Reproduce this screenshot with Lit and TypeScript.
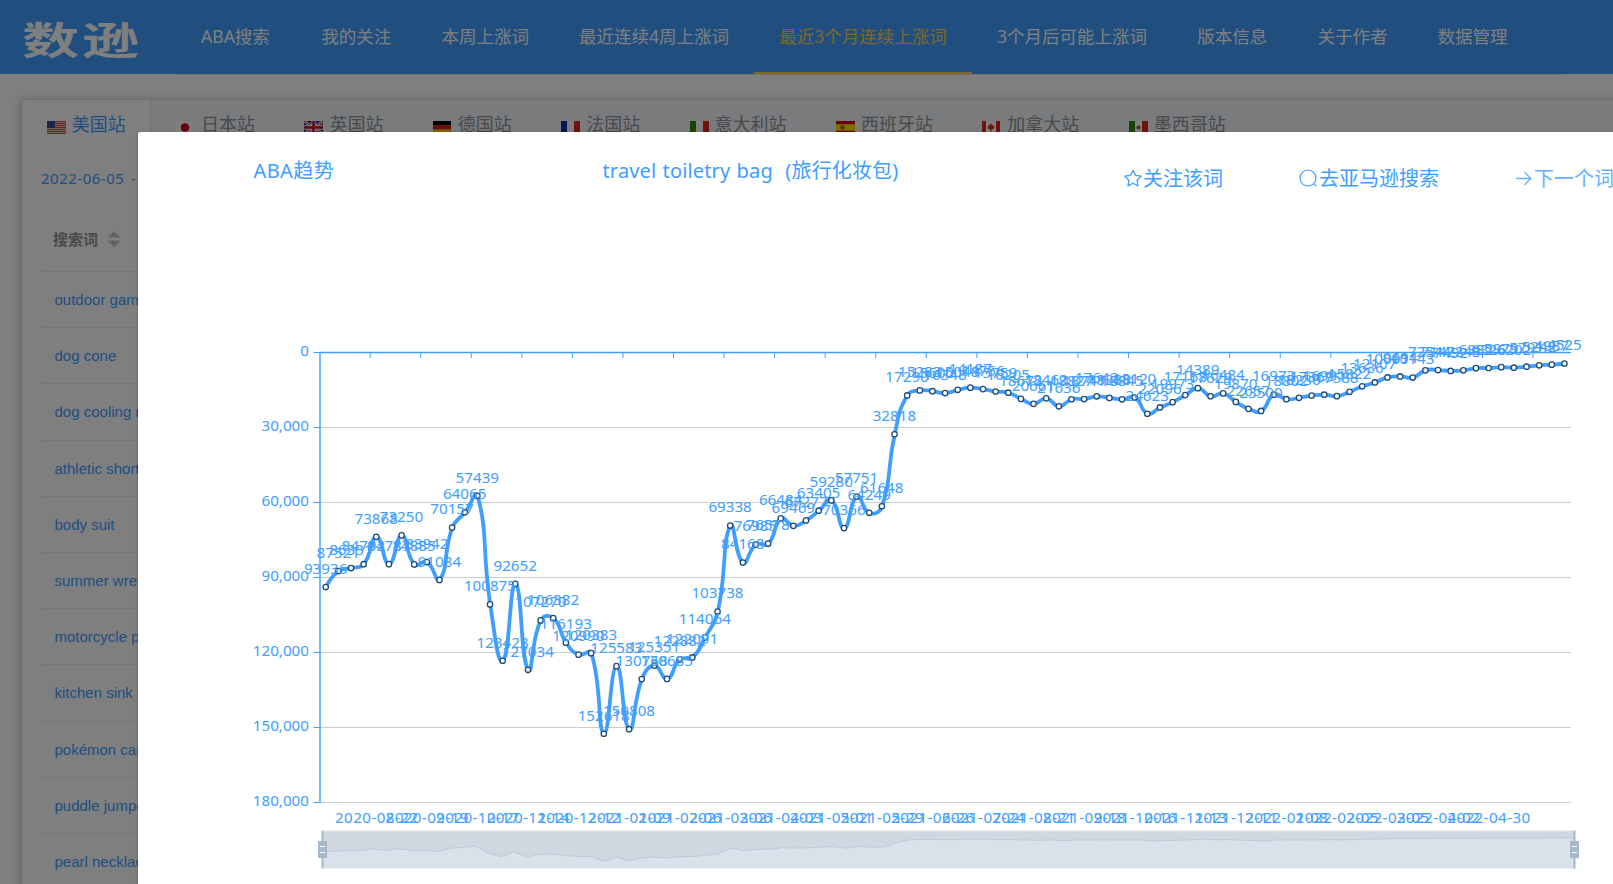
import { LitElement, html, svg, css } from 'lit';
import { customElement, property } from 'lit/decorators.js';
import { classMap } from 'lit/directives/class-map.js';

const RANKS = [
  93936, 87521, 86331, 84792, 73868, 84787, 73250, 84885, 83942, 91084,
  70157, 64065, 57439, 100875, 123423, 92652, 127034, 107270, 106382, 116193,
  120990, 120383, 152618, 125583, 150808, 130768, 125351, 130685, 122882, 122091,
  114064, 103738, 69338, 84168, 76985, 76578, 66484, 69469, 67277, 63405,
  59280, 70366, 57751, 64249, 61648, 32818, 17290, 15283, 15600, 16348,
  15048, 14187, 14756, 15759, 16205, 18672, 20661, 18462, 21636, 18827,
  18741, 17642, 18288, 18845, 18120, 24623, 22096, 19973, 17168, 14389,
  17629, 16484, 19870, 22657, 23500, 16973, 18802, 18236, 17369, 16991,
  17588, 15822, 13636, 12107, 10091, 9694, 10143, 7254, 7142, 7492,
  7243, 6382, 6326, 5979, 6202, 5791, 5242, 4987, 4525,
];

// one label for every fourth week, beginning with the fifth point
const DATES = [
  '2020-08-22', '2020-09-19', '2020-10-17', '2020-11-14', '2020-12-12', '2021-01-09',
  '2021-02-06', '2021-03-06', '2021-04-03', '2021-05-01', '2021-05-29', '2021-06-26',
  '2021-07-24', '2021-08-21', '2021-09-18', '2021-10-16', '2021-11-13', '2021-12-11',
  '2022-01-08', '2022-02-05', '2022-03-05', '2022-04-02', '2022-04-30',
];

const NAV = [
  'ABA搜索', '我的关注', '本周上涨词', '最近连续4周上涨词', '最近3个月连续上涨词',
  '3个月后可能上涨词', '版本信息', '关于作者', '数据管理',
];

const SITES = [
  ['us', '美国站'], ['jp', '日本站'], ['gb', '英国站'], ['de', '德国站'], ['fr', '法国站'],
  ['it', '意大利站'], ['es', '西班牙站'], ['ca', '加拿大站'], ['mx', '墨西哥站'],
];

const WORDS = [
  'outdoor games', 'dog cone', 'dog cooling mat', 'athletic shorts', 'body suit',
  'summer wreath', 'motorcycle phone mount', 'kitchen sink mat', 'pokémon cards',
  'puddle jumper', 'pearl necklace',
];

const FLAGS: Record<string, unknown> = {
  us: svg`<rect width="19" height="13" fill="#fff"/>
    ${[0, 2, 4, 6, 8, 10, 12].map(y => svg`<rect y=${y} width="19" height="1" fill="#d8504c"/>`)}
    ${[1, 3, 5, 7, 9, 11].map(y => svg`<rect y=${y} width="19" height="1" fill="#f0b4b4"/>`)}
    <rect width="8" height="7" fill="#3c4a8c"/>`,
  jp: svg`<rect width="17" height="13" fill="#fff"/><circle cx="9" cy="6.5" r="4.3" fill="#d0021b"/>`,
  gb: svg`<rect width="19" height="13" fill="#0a2a8c"/>
    <path d="M0 0L19 13M19 0L0 13" stroke="#fff" stroke-width="2.8"/>
    <path d="M0 0L19 13M19 0L0 13" stroke="#d0021b" stroke-width="1"/>
    <path d="M9.5 0V13M0 6.5H19" stroke="#fff" stroke-width="4.4"/>
    <path d="M9.5 0V13M0 6.5H19" stroke="#d0021b" stroke-width="2.4"/>`,
  de: svg`<rect width="18" height="4.5" fill="#000"/><rect y="4.3" width="18" height="4.4" fill="#dd1a00"/>
    <rect y="8.6" width="18" height="4.4" fill="#ffc800"/>`,
  fr: svg`<rect width="19" height="13" fill="#fff"/><rect width="6" height="13" fill="#0032a0"/>
    <rect x="13" width="6" height="13" fill="#e1261c"/>`,
  it: svg`<rect width="19" height="13" fill="#fff"/><rect width="6" height="13" fill="#2e8b00"/>
    <rect x="13" width="6" height="13" fill="#e1261c"/>`,
  es: svg`<rect width="19" height="13" fill="#ffe000"/><rect width="19" height="3.2" fill="#d0021b"/>
    <rect y="9.8" width="19" height="3.2" fill="#d0021b"/><circle cx="6.5" cy="6.5" r="2.2" fill="#a0671a"/>`,
  ca: svg`<rect width="18" height="13" fill="#fff"/><rect width="4" height="13" fill="#e1261c"/>
    <rect x="14" width="4" height="13" fill="#e1261c"/>
    <path d="M9 2l1 2 1-.5.1 1.5L12.5 5.5 11.5 8 9.5 8.8V11h-1V8.8L6.5 8 5.5 5.5 6.9 5 7 3.5 8 4z" fill="#e1261c"/>`,
  mx: svg`<rect width="19" height="13" fill="#fff"/><rect width="6" height="13" fill="#2e8b00"/>
    <rect x="13" width="6" height="13" fill="#e1261c"/><circle cx="9.5" cy="6.5" r="2" fill="#8a5a2a"/>`,
};

const BLUE = '#409eff';

@customElement('rank-chart')
export class RankChart extends LitElement {
  @property({ attribute: false }) ranks: number[] = [];
  @property({ attribute: false }) dates: string[] = [];

  static styles = css`
    :host {
      display: block;
    }

    svg {
      display: block;
      font-family: "Noto Sans", "Open Sans", sans-serif;
      font-size: 15.2px;
    }

    .label {
      fill: #409eff;
      text-anchor: middle;
    }

    .axis-label {
      fill: #409eff;
      text-anchor: end;
    }
  `;

  // plot area inside the drawing
  left = 181.6;
  top = 132.5;
  step = 12.64;

  px(i: number) {
    return this.left + (i + 0.5) * this.step;
  }

  py(v: number) {
    return this.top - 0.3 + v / 400;
  }

  // cubic path whose control points stay inside the bounds of the series
  smoothPath() {
    const pts = this.ranks.map((v, i) => [this.px(i), this.py(v)]);
    const ys = pts.map(p => p[1]);
    const min = Math.min(...ys);
    const max = Math.max(...ys);
    const clamp = (y: number) => Math.max(min, Math.min(max, y));
    const dist = (a: number[], b: number[]) => Math.hypot(a[0] - b[0], a[1] - b[1]);
    let d = `M${pts[0][0]} ${pts[0][1]}`;
    let out = pts[0];
    for (let i = 1; i < pts.length; i++) {
      const p = pts[i];
      const prev = pts[i - 1];
      const next = pts[i + 1] || p;
      const ratio = dist(next, p) / (dist(next, p) + dist(prev, p));
      const vx = next[0] - prev[0];
      const vy = next[1] - prev[1];
      const cin = i === pts.length - 1
        ? p
        : [p[0] - vx * 0.5 * (1 - ratio), clamp(p[1] - vy * 0.5 * (1 - ratio))];
      d += `C${out[0]} ${out[1]} ${cin[0]} ${cin[1]} ${p[0]} ${p[1]}`;
      out = [p[0] + vx * 0.5 * ratio, clamp(p[1] + vy * 0.5 * ratio)];
    }
    return d;
  }

  renderZoomBar() {
    const x0 = 184.5;
    const x1 = 1436.5;
    const line = this.ranks
      .map((v, i) => `${x0 + ((x1 - x0) * i) / (this.ranks.length - 1)},${617 + v * 0.00016}`)
      .join(' ');
    return svg`
      <rect x=${x0} y="611" width=${x1 - x0} height="37" fill="#d1d7e1"/>
      <polygon points="${x0},648 ${line} ${x1},648" fill="#dae1eb"/>
      <polyline points=${line} fill="none" stroke="#c1c8d6"/>
      <path d="M${x0} 611H${x1}M${x0} 648H${x1}" stroke="#e2e2e4"/>
      ${[x0, x1].map(x => svg`
        <path d="M${x} 610.5V648.5" stroke="#a7b7cc" stroke-width="2"/>
        <rect x=${x - 4.5} y="621" width="9" height="17" fill="#a7b7cc"/>
        <path d="M${x - 2.5} 626.5h5M${x - 2.5} 632.5h5" stroke="#fff"/>`)}
    `;
  }

  render() {
    const { left, top, step } = this;
    const right = left + step * 99;
    const rows = [0, 1, 2, 3, 4, 5, 6];
    return html`
      <svg width="1475" height="664" viewBox="0 0 1475 664">
        ${rows.slice(1).map(r => svg`
          <path d="M${left} ${top + r * 75}H${right}" stroke="#ccc"/>`)}
        ${rows.map(r => svg`
          <path d="M175.5 ${top + r * 75}H182" stroke=${BLUE}/>
          <text class="axis-label" x="171" y=${top + r * 75 + 3.3}>${(r * 30000).toLocaleString('en-US')}</text>`)}
        <path d="M182 ${top}V583" stroke=${BLUE} stroke-width="1.4"/>
        <path d="M${left} ${top}H${right}" stroke=${BLUE} stroke-width="1.3"/>
        ${Array.from({ length: 24 }, (_, i) => svg`
          <path d="M${left + (i + 1) * 4 * step} ${top}v5.5" stroke=${BLUE}/>`)}
        ${this.dates.map((d, i) => svg`
          <text class="label" x=${this.px(4 + i * 4)} y="602.6" textLength="83">${d}</text>`)}
        <path d=${this.smoothPath()} fill="none" stroke=${BLUE} stroke-width="3.8" stroke-linejoin="round"/>
        ${this.ranks.map((v, i) => svg`
          <circle cx=${this.px(i) - 0.2} cy=${this.py(v)} r="2.7" fill="#fff" stroke="#1d4c7d" stroke-width="1.3"/>`)}
        ${this.ranks.map((v, i) => svg`
          <text class="label" x=${this.px(i) - 0.3} y=${this.py(v) - 13.2}>${v}</text>`)}
        ${this.renderZoomBar()}
      </svg>
    `;
  }
}

@customElement('app-root')
export class AppRoot extends LitElement {
  static styles = css`
    :host {
      display: block;
      position: relative;
      height: 884px;
      overflow: hidden;
      background: #fff;
      color: #409eff;
      font-family: "Noto Sans", "Noto Sans CJK SC", sans-serif;
    }

    .header {
      display: flex;
      height: 74px;
      background: #409eff;
    }

    .logo {
      width: 176px;
      flex: none;
    }

    .logo text {
      font-family: "Noto Sans CJK SC", sans-serif;
      font-size: 38px;
      font-weight: 700;
      fill: #fff;
    }

    .nav {
      display: flex;
      width: 1385px;
      height: 74px;
      border-bottom: 1px solid #e6e6e6;
    }

    .nav-item {
      box-sizing: border-box;
      padding: 0 25.1px;
      height: 74px;
      line-height: 72px;
      font-size: 17.5px;
      color: #fff;
      white-space: nowrap;
      border-bottom: 2px solid transparent;
    }

    .nav-item:first-child {
      padding-right: 26.3px;
    }

    .nav-item.active {
      color: #ffd04b;
      border-bottom-color: #ffd04b;
    }

    .card {
      box-sizing: border-box;
      margin: 25px 0 0 21px;
      width: 1640px;
      height: 900px;
      border: 1px solid #dcdfe6;
      box-shadow: 0 2px 12px rgba(0, 0, 0, 0.24);
    }

    .tabs {
      display: flex;
      height: 52px;
      background: #f5f7fa;
    }

    .tab {
      display: flex;
      align-items: center;
      gap: 6px;
      padding: 0 24.7px;
      font-size: 18px;
      line-height: 48px;
      color: #909399;
      white-space: nowrap;
    }

    .tab span {
      height: 52px;
    }

    .tab.active {
      background: #fff;
      color: #409eff;
      border-right: 1px solid #dcdfe6;
    }

    .flag {
      display: block;
      margin-top: 2px;
    }

    .date {
      padding-left: 19px;
      height: 54px;
      line-height: 52px;
      font-size: 15px;
      letter-spacing: 0.5px;
      word-spacing: 2px;
    }

    .table {
      margin-left: 19px;
    }

    .table-head {
      display: flex;
      align-items: center;
      gap: 8.5px;
      height: 65px;
      padding-left: 12px;
      font-size: 15px;
      font-weight: 700;
      color: #909399;
      border-bottom: 1px solid #ebeef5;
    }

    .row {
      box-sizing: border-box;
      height: 56.2px;
      padding-left: 13.5px;
      line-height: 56px;
      border-bottom: 1px solid #ebeef5;
      font-family: "Liberation Sans", Arial, sans-serif;
      font-size: 15px;
      white-space: nowrap;
    }

    .mask {
      position: absolute;
      inset: 0;
      background: rgba(0, 0, 0, 0.5);
    }

    .dialog {
      position: absolute;
      left: 138px;
      top: 132px;
      width: 1500px;
      height: 800px;
      background: #fff;
      border-radius: 2px;
      box-shadow: 0 1px 3px rgba(0, 0, 0, 0.3);
    }

    .dialog-head {
      display: flex;
      height: 88px;
      padding-left: 115.5px;
      font-size: 20px;
      line-height: 28px;
      white-space: nowrap;
    }

    .title {
      width: 349px;
      margin-top: 25px;
      letter-spacing: 0.4px;
    }

    .keyword {
      width: 521.5px;
      margin-top: 25px;
      white-space: pre;
      letter-spacing: 0.15px;
      word-spacing: 0.9px;
    }

    .link {
      display: flex;
      margin-top: 33px;
    }

    .link svg {
      margin: 4px 1px 0 0;
    }

    .follow {
      width: 175px;
    }

    .search {
      width: 217px;
    }

    .next {
      color: #66b1ff;
    }
  `;

  render() {
    return html`
      <header class="header">
        <svg class="logo" height="74">
          <text transform="translate(22 54) scale(1.5 1)">数</text>
          <text transform="translate(82 54) scale(1.5 1)">逊</text>
        </svg>
        <nav class="nav">
          ${NAV.map((n, i) => html`<div class=${classMap({ 'nav-item': true, active: i === 4 })}>${n}</div>`)}
        </nav>
      </header>

      <section class="card">
        <div class="tabs">
          ${SITES.map(([code, name], i) => html`
            <div class=${classMap({ tab: true, active: i === 0 })}>
              <svg class="flag" width="19" height="13">${FLAGS[code]}</svg>
              <span>${name}</span>
            </div>`)}
        </div>
        <div class="date">2022-06-05 - 2022-06-11</div>
        <div class="table">
          <div class="table-head">
            搜索词
            <svg width="14" height="16"><path d="M7 0l6.5 6.5H.5zM7 16L.5 9.5h13z" fill="#c0c4cc"/></svg>
          </div>
          ${WORDS.map(w => html`<div class="row">${w}</div>`)}
        </div>
      </section>

      <div class="mask"></div>

      <section class="dialog">
        <div class="dialog-head">
          <div class="title">ABA趋势</div>
          <div class="keyword">travel toiletry bag  (旅行化妆包)</div>
          <div class="link follow">
            <svg width="18" height="19" fill="none" stroke="currentColor" stroke-width="1.3" stroke-linejoin="round">
              <path d="M9 1.2l2.5 5.1 5.7.9-4.1 4 .9 5.7L9 14.2l-5 2.7.9-5.7-4.1-4 5.7-.9z"/>
            </svg>
            关注该词
          </div>
          <div class="link search">
            <svg width="19" height="19" fill="none" stroke="currentColor" stroke-width="1.2">
              <circle cx="9" cy="9" r="8"/><path d="M14.6 14.6l2.7 2.7"/>
            </svg>
            去亚马逊搜索
          </div>
          <div class="link next">
            <svg width="17" height="19" fill="none" stroke="currentColor" stroke-width="1.3">
              <path d="M0 9.5h14.5M8.5 3l6.2 6.5L8.5 16"/>
            </svg>
            下一个词
          </div>
        </div>
        <rank-chart .ranks=${RANKS} .dates=${DATES}></rank-chart>
      </section>
    `;
  }
}
